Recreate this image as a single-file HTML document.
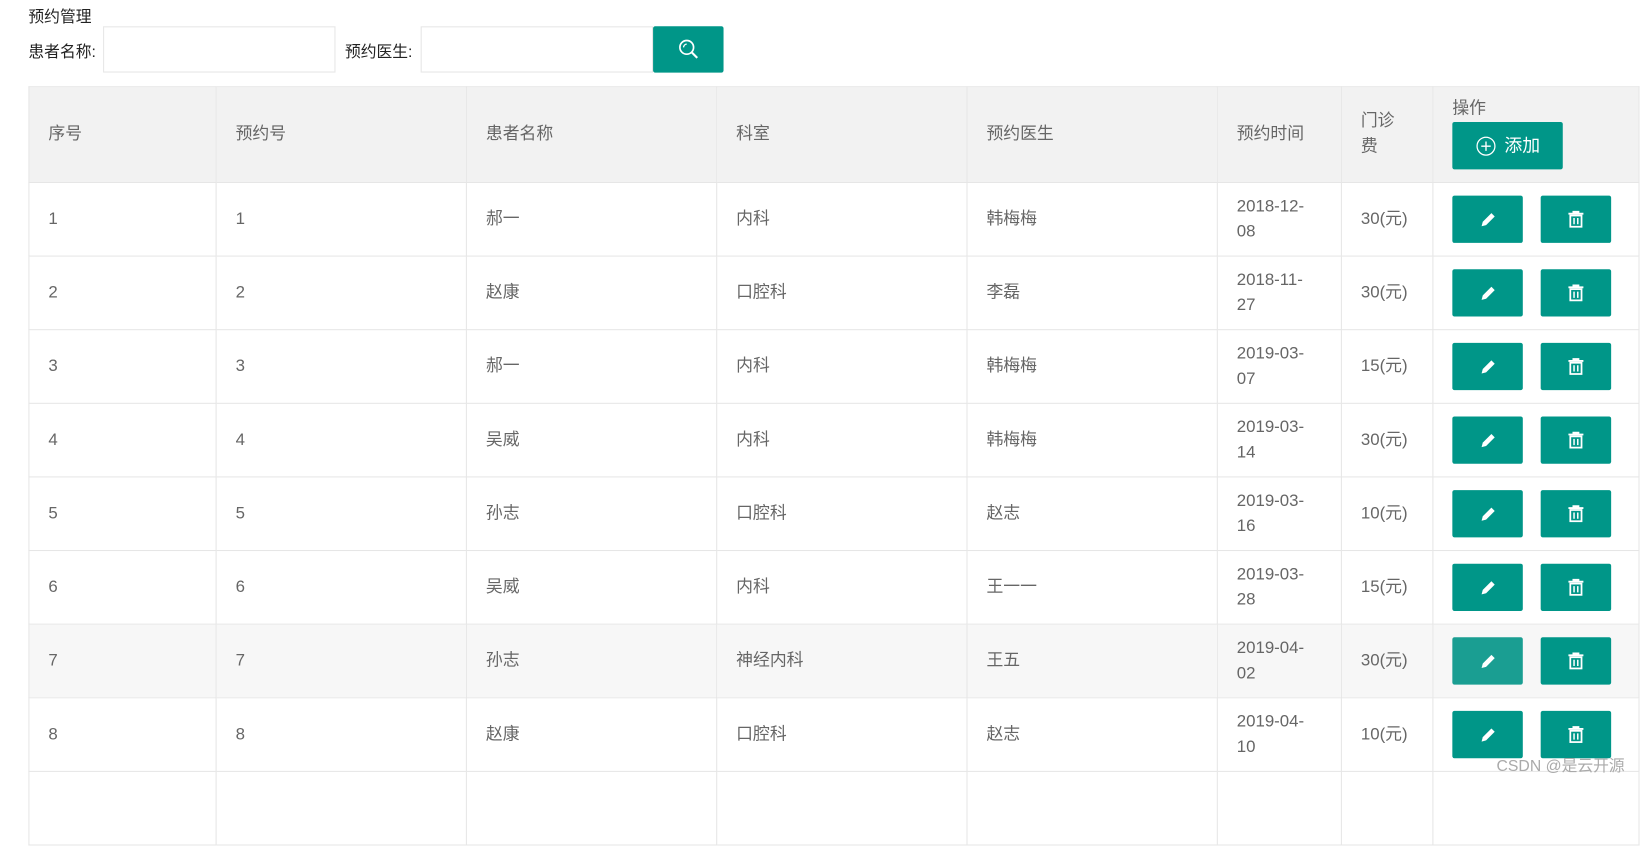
<!DOCTYPE html>
<html><head><meta charset="utf-8"><style>
html,body{margin:0;padding:0;background:#fff;width:1649px;height:784px;overflow:hidden}
#w{position:absolute;left:0;top:0;width:1568px;height:745px;transform:scale(1.05166);transform-origin:0 0;font-family:"Liberation Sans","Noto Sans CJK SC",sans-serif;color:#333}
.t{position:absolute;font-size:15px;color:#222}
.in{position:absolute;border:1px solid #e6e6e6;background:#fff;box-sizing:border-box}
.btn{position:absolute;background:#009688;border-radius:2px;display:flex;align-items:center;justify-content:center;color:#fff}
table{position:absolute;left:27px;top:82px;border-collapse:collapse;table-layout:fixed;font-size:16px;color:#666}
td{border:1px solid #e6e6e6;height:69px;padding:0 0 0 18px;vertical-align:middle;line-height:24px;position:relative}
tr.h td{background:#f2f2f2;height:90px}
tr.h td.op{vertical-align:top;padding-top:9px;height:81px}
tr.hv td{background:#f7f7f7}
.e,.d{position:absolute;top:12px;width:67px;height:45px;background:#009688;border-radius:2px;display:flex;align-items:center;justify-content:center}
.e{left:18px}.d{left:102px}
</style></head><body><div id="w">
<div class="t" style="left:27px;top:5px">预约管理</div>
<div class="t" style="left:27px;top:38px">患者名称:</div>
<div class="in" style="left:98px;top:25px;width:221px;height:44px"></div>
<div class="t" style="left:328px;top:38px">预约医生:</div>
<div class="in" style="left:400px;top:25px;width:221px;height:44px"></div>
<div class="btn" style="left:621px;top:25px;width:67px;height:44px"><svg width="22" height="22" viewBox="0 0 22 22"><circle cx="9" cy="9" r="6.5" fill="none" stroke="#fff" stroke-width="1.6"/><path d="M14 14l5 5" stroke="#fff" stroke-width="2"/><path d="M6 9a3 3 0 0 1 3-3" stroke="#fff" fill="none" stroke-width="1.2"/></svg></div>
<table>
<colgroup><col style="width:178px"><col style="width:238px"><col style="width:238px"><col style="width:238px"><col style="width:238px"><col style="width:118px"><col style="width:87px"><col style="width:196px"></colgroup>
<tr class="h"><td>序号</td><td>预约号</td><td>患者名称</td><td>科室</td><td>预约医生</td><td>预约时间</td><td>门诊<br>费</td><td class="op">操作<div class="btn" style="position:relative;width:105px;height:45px;font-size:17px"><svg width="20" height="20" viewBox="0 0 20 20" style="margin-right:8px"><circle cx="10" cy="10" r="8.5" fill="none" stroke="#fff" stroke-width="1.2"/><path d="M10 5.5v9M5.5 10h9" stroke="#fff" stroke-width="1.3"/></svg>添加</div></td></tr>
</table>
<script>
var d=[[1,"郝一","内科","韩梅梅","2018-12-<br>08","30"],[2,"赵康","口腔科","李磊","2018-11-<br>27","30"],[3,"郝一","内科","韩梅梅","2019-03-<br>07","15"],[4,"吴威","内科","韩梅梅","2019-03-<br>14","30"],[5,"孙志","口腔科","赵志","2019-03-<br>16","10"],[6,"吴威","内科","王一一","2019-03-<br>28","15"],[7,"孙志","神经内科","王五","2019-04-<br>02","30"],[8,"赵康","口腔科","赵志","2019-04-<br>10","10"],["","","","","",""]];
var pen='<svg width="18" height="18" viewBox="0 0 16 16"><path d="M2.5 13.5l1-3.8 7.3-7.3 2.8 2.8-7.3 7.3z" fill="#fff"/></svg>';
var tr='<svg width="19" height="19" viewBox="0 0 16 16"><path d="M2 3.5h12M6 3.5V2h4v1.5" stroke="#fff" stroke-width="1.5" fill="none"/><rect x="3.5" y="5" width="9" height="9" fill="none" stroke="#fff" stroke-width="1.4"/><path d="M6.5 7v5M9.5 7v5" stroke="#fff" stroke-width="1.2"/></svg>';
var h='';d.forEach(function(r,i){var last=r[0]==="";h+='<tr'+(i==6?' class="hv"':'')+'><td>'+r[0]+'</td><td>'+r[0]+'</td><td>'+r[1]+'</td><td>'+r[2]+'</td><td>'+r[3]+'</td><td>'+r[4]+'</td><td>'+(last?'':r[5]+'(元)')+'</td><td>'+(last?'':'<div class="e"'+(i==6?' style="background:#1a9e92"':'')+'>'+pen+'</div><div class="d">'+tr+'</div>')+'</td></tr>';});
document.querySelector('table').insertAdjacentHTML('beforeend',h);
</script>
<div style="position:absolute;left:1423px;top:717px;font-size:15px;color:#aaa">CSDN @是云开源</div>
</div></body></html>
